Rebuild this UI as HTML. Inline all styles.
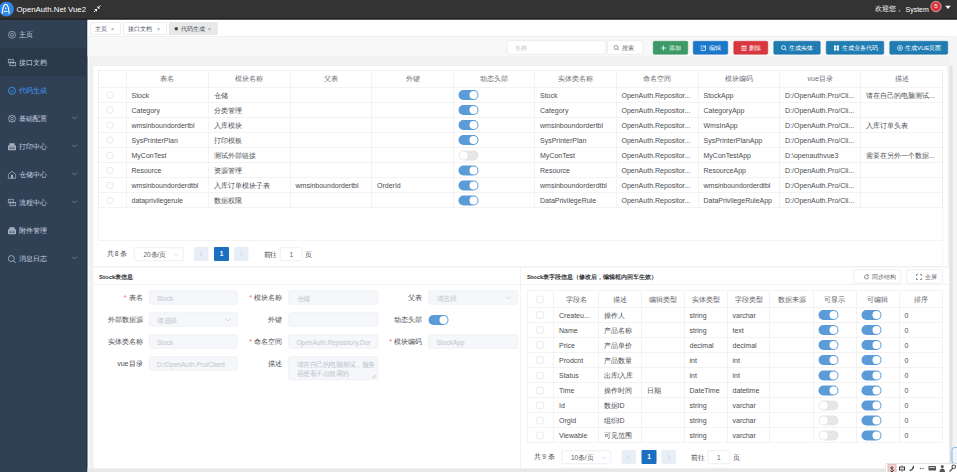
<!DOCTYPE html><html><head><meta charset="utf-8"><title>OpenAuth.Net</title><style>
html,body{margin:0;padding:0;width:957px;height:472px;overflow:hidden;background:#f2f2f2}
#root{position:absolute;left:0;top:0;width:1914px;height:944px;transform:scale(0.5);transform-origin:0 0;font-family:"Liberation Sans",sans-serif;overflow:hidden;background:#f1f1f1;color:#606266}
.a{position:absolute;box-sizing:border-box}
.t{position:absolute;white-space:nowrap;line-height:1}
.hdr{left:0;top:0;width:1914px;height:38.5px;background:#333;border-bottom:2px solid #181818;z-index:2}
.side{left:0;top:38px;width:174px;height:906px;background:#304156}
.mi{position:absolute;left:0;width:173px;height:56px}
.mi .t{left:37px;top:21px;font-size:14px;color:#ccd5e0}
.mi svg{position:absolute;left:15px;top:20px}
.mi .arr{position:absolute;left:143px;top:23px}
.tabs{left:175px;top:38px;width:1739px;height:35px;background:#fff;border-bottom:1px solid #dcdfe6}
.tab{position:absolute;top:45px;height:24.5px;border:1px solid #d8dce5;background:#fff;box-sizing:border-box;font-size:12px;color:#495060}
.tab .t{top:6px}
.btn{position:absolute;top:82px;height:27px;border-radius:3px;box-sizing:border-box;color:#fff;font-size:12px}
.btn .t{top:7px}
.tbl{position:absolute;border-left:1px solid #e6e6e6;border-top:1px solid #e6e6e6;box-sizing:border-box}
.cell{position:absolute;box-sizing:border-box;border-right:1px solid #e6e6e6;border-bottom:1px solid #e6e6e6;font-size:14px;color:#4a4c50;overflow:hidden}
.cell .t{top:8px;left:10px}
.hc{color:#6a6d73;text-align:center}
.sw{position:absolute;width:40px;height:20px;border-radius:10px;background:#5a9bd8}
.sw:after{content:"";position:absolute;right:2px;top:2px;width:16px;height:16px;border-radius:8px;background:#fff}
.sw.off{background:#e6e6e6}
.sw.off:after{right:auto;left:2px}
.radio{position:absolute;width:14px;height:14px;border:1.5px solid #cfd2d8;border-radius:8px;box-sizing:border-box;background:#fff}
.chk{position:absolute;width:14px;height:14px;border:1.5px solid #d2d5db;border-radius:2px;box-sizing:border-box;background:#fff}
.inp{position:absolute;height:28px;border:1px solid #e4e7ed;background:#f5f7fa;border-radius:4px;box-sizing:border-box;font-size:13px;color:#c0c4cc}
.inp .t{left:15px;top:8px}
.lbl{position:absolute;font-size:14px;color:#4a4c50;white-space:nowrap;line-height:1;text-align:right}
.star{color:#f56c6c}
.pg{position:absolute;font-size:13px;color:#4a4c50}
.nocjk .c{font-size:1.33em;line-height:0;position:relative;top:.11em;-webkit-text-stroke:0.4px currentColor}
</style></head><body><div id="root">
<div class="a hdr">
<svg class="a" style="left:-2px;top:3px" width="31" height="31" viewBox="0 0 31 31"><circle cx="15" cy="15" r="14.8" fill="#2f86e8"/><path d="M6.8 23.5 C7.2 13 10 5.6 13.4 5.6 C16.8 5.6 19.6 13 20.2 23.5" fill="none" stroke="#fff" stroke-width="2.4" stroke-linecap="round"/><path d="M10 19.8 H17" fill="none" stroke="#fff" stroke-width="2"/><circle cx="13.4" cy="13.6" r="1.6" fill="#fff"/></svg>
<div class="t" style="left:33px;top:9.5px;font-size:15.6px;color:#fff">OpenAuth.Net Vue2</div>
<svg class="a" style="left:187px;top:10px" width="15" height="15" viewBox="0 0 15 15"><path d="M7 8 L7 13.5 L1.5 8 Z M8 7 L8 1.5 L13.5 7 Z" fill="#fff"/><path d="M0.8 14.2 L4.5 10.5 M14.2 0.8 L10.5 4.5" stroke="#fff" stroke-width="1.8"/></svg>
<div class="t" style="left:1750px;top:10px;font-size:14px;color:#fff"><span class="c">欢迎您，</span></div>
<div class="t" style="left:1811px;top:11px;font-size:14px;color:#fff">System</div>
<div class="a" style="left:1861px;top:2px;width:22px;height:22px;border-radius:11px;background:#d9363e;border:1.5px solid #fff;color:#fff;font-size:12px;text-align:center;line-height:19px">5</div>
<svg class="a" style="left:1890px;top:11px" width="12" height="8" viewBox="0 0 12 8"><path d="M0 0 H12 L6 7 Z" fill="#fff"/></svg>
</div>
<div class="a side"></div>
<div class="a" style="left:174px;top:73px;width:4px;height:871px;background:#fbfcfe"></div>
<div class="a" style="left:172.5px;top:38px;width:2px;height:906px;background:#1f2c3b"></div>
<div class="mi" style="top:40.5px;">
<svg width="18" height="18" viewBox="0 0 18 18"><circle cx="9" cy="8.5" r="7" fill="none" stroke="#a9b4c2" stroke-width="1.5"/><circle cx="9" cy="8.5" r="3" fill="none" stroke="#a9b4c2" stroke-width="1.5"/></svg>
<div class="t" style=""><span class="c">主页</span></div>
</div>
<div class="mi" style="top:96.5px;background:#2b3a4b;">
<svg width="18" height="18" viewBox="0 0 18 18"><rect x="1.5" y="1.5" width="10" height="7" fill="none" stroke="#a9b4c2" stroke-width="1.6"/><rect x="5" y="8" width="11.5" height="6.5" fill="none" stroke="#a9b4c2" stroke-width="1.6"/><path d="M4.5 4.5 L13 11" stroke="#a9b4c2" stroke-width="1.4"/></svg>
<div class="t" style=""><span class="c">接口文档</span></div>
</div>
<div class="mi" style="top:152.5px;">
<svg width="18" height="18" viewBox="0 0 18 18"><circle cx="9" cy="8.5" r="7" fill="none" stroke="#409eff" stroke-width="1.6"/><path d="M5.5 8.5 L8 11 L12.5 6" fill="none" stroke="#409eff" stroke-width="1.6"/></svg>
<div class="t" style="color:#409eff;"><span class="c">代码生成</span></div>
</div>
<div class="mi" style="top:208.5px;">
<svg width="18" height="18" viewBox="0 0 18 18"><path d="M9 0.5 L11 3.5 L14.5 2.5 L14.5 6 L17.5 8 L14.5 10.5 L14.5 14 L11 13 L9 16 L7 13 L3.5 14 L3.5 10.5 L0.5 8 L3.5 6 L3.5 2.5 L7 3.5 Z" fill="none" stroke="#a9b4c2" stroke-width="1.6" stroke-linejoin="round"/><circle cx="9" cy="8.2" r="2.6" fill="none" stroke="#a9b4c2" stroke-width="1.5"/></svg>
<div class="t" style=""><span class="c">基础配置</span></div>
<svg class="arr" width="12" height="8" viewBox="0 0 12 8"><path d="M1 1 L6 6 L11 1" fill="none" stroke="#909aa8" stroke-width="1.3"/></svg>
</div>
<div class="mi" style="top:264.5px;">
<svg width="18" height="18" viewBox="0 0 18 18"><rect x="4" y="1.5" width="10" height="5" fill="#a9b4c2"/><rect x="1" y="5.5" width="16" height="10" rx="1.5" fill="#a9b4c2"/><rect x="3" y="8" width="12" height="3" fill="#7d8a9b"/><rect x="3" y="12" width="12" height="1.2" fill="#304156"/></svg>
<div class="t" style=""><span class="c">打印中心</span></div>
<svg class="arr" width="12" height="8" viewBox="0 0 12 8"><path d="M1 1 L6 6 L11 1" fill="none" stroke="#909aa8" stroke-width="1.3"/></svg>
</div>
<div class="mi" style="top:320.5px;">
<svg width="18" height="18" viewBox="0 0 18 18"><path d="M1.5 8 L9 1.5 L16.5 8 V15.5 H1.5 Z" fill="none" stroke="#a9b4c2" stroke-width="1.6" stroke-linejoin="round"/><rect x="7" y="8.5" width="4" height="7" fill="#a9b4c2"/></svg>
<div class="t" style=""><span class="c">仓储中心</span></div>
<svg class="arr" width="12" height="8" viewBox="0 0 12 8"><path d="M1 1 L6 6 L11 1" fill="none" stroke="#909aa8" stroke-width="1.3"/></svg>
</div>
<div class="mi" style="top:376.5px;">
<svg width="18" height="18" viewBox="0 0 18 18"><rect x="1.5" y="1.5" width="10" height="7" fill="none" stroke="#a9b4c2" stroke-width="1.6"/><rect x="5" y="8" width="11.5" height="6.5" fill="none" stroke="#a9b4c2" stroke-width="1.6"/><path d="M4.5 4.5 L13 11" stroke="#a9b4c2" stroke-width="1.4"/></svg>
<div class="t" style=""><span class="c">流程中心</span></div>
<svg class="arr" width="12" height="8" viewBox="0 0 12 8"><path d="M1 1 L6 6 L11 1" fill="none" stroke="#909aa8" stroke-width="1.3"/></svg>
</div>
<div class="mi" style="top:432.5px;">
<svg width="18" height="18" viewBox="0 0 18 18"><rect x="4" y="1.5" width="10" height="5" fill="#a9b4c2"/><rect x="1" y="5.5" width="16" height="10" rx="1.5" fill="#a9b4c2"/><rect x="3" y="8" width="12" height="3" fill="#7d8a9b"/><rect x="3" y="12" width="12" height="1.2" fill="#304156"/></svg>
<div class="t" style=""><span class="c">附件管理</span></div>
</div>
<div class="mi" style="top:488.5px;">
<svg width="18" height="18" viewBox="0 0 18 18"><circle cx="7.6" cy="8.1" r="6" fill="none" stroke="#a9b4c2" stroke-width="1.7"/><path d="M11.8 12.3 L16 16.5" stroke="#a9b4c2" stroke-width="1.8" stroke-linecap="round"/></svg>
<div class="t" style=""><span class="c">消息日志</span></div>
<svg class="arr" width="12" height="8" viewBox="0 0 12 8"><path d="M1 1 L6 6 L11 1" fill="none" stroke="#909aa8" stroke-width="1.3"/></svg>
</div>
<div class="a tabs"></div>
<div class="tab" style="left:181px;width:60px;">
<div class="t" style="left:8px"><span class="c">主页</span></div>
<div class="t" style="left:40px;top:7px;font-size:10px;color:#888">×</div>
</div>
<div class="tab" style="left:247px;width:86px;">
<div class="t" style="left:8px"><span class="c">接口文档</span></div>
<div class="t" style="left:66px;top:7px;font-size:10px;color:#888">×</div>
</div>
<div class="tab" style="left:338px;width:97px;background:#e8e8e8;border-color:#e0e0e0;">
<div class="a" style="left:10px;top:8px;width:7px;height:7px;border-radius:4px;background:#444"></div>
<div class="t" style="left:23px"><span class="c">代码生成</span></div>
<div class="t" style="left:77px;top:7px;font-size:10px;color:#888">×</div>
</div>
<div class="a" style="left:175px;top:73px;width:1739px;height:40px;background:#f8f8f8"></div>
<div class="a" style="left:1014px;top:81px;width:198px;height:28px;border:1px solid #dcdfe6;border-radius:4px;background:#fff"><div class="t" style="left:14px;top:8px;font-size:12px;color:#c0c4cc"><span class="c">名称</span></div></div>
<div class="a" style="left:1214px;top:81px;width:72px;height:28px;border:1px solid #dcdfe6;border-radius:4px;background:#fff"><svg class="a" style="left:12px;top:8px" width="12" height="12" viewBox="0 0 12 12"><circle cx="5" cy="5" r="4" fill="none" stroke="#606266" stroke-width="1.3"/><path d="M8 8 L11 11" stroke="#606266" stroke-width="1.3"/></svg><div class="t" style="left:28px;top:8px;font-size:12px;color:#606266"><span class="c">搜索</span></div></div>
<div class="btn" style="left:1306px;width:70px;background:#3d9a66;border:1px solid #2f8656">
<svg class="a" style="left:14px;top:7px" width="12" height="12" viewBox="0 0 12 12"><path d="M6 1 V11 M1 6 H11" stroke="#fff" stroke-width="1.6"/></svg>
<div class="t" style="left:30px"><span class="c">添加</span></div>
</div>
<div class="btn" style="left:1386px;width:70px;background:#1a78cb;border:1px solid #1467b0">
<svg class="a" style="left:14px;top:7px" width="12" height="12" viewBox="0 0 12 12"><rect x="1" y="2" width="9" height="9" fill="none" stroke="#fff" stroke-width="1.4"/><path d="M5 7 L11 1" stroke="#fff" stroke-width="1.6"/></svg>
<div class="t" style="left:30px"><span class="c">编辑</span></div>
</div>
<div class="btn" style="left:1467px;width:69px;background:#d9363e;border:1px solid #c02e36">
<svg class="a" style="left:14px;top:7px" width="12" height="12" viewBox="0 0 12 12"><rect x="2" y="3" width="8" height="8" fill="none" stroke="#fff" stroke-width="1.4"/><path d="M1 2 H11 M5 5 V9 M7 5 V9" stroke="#fff" stroke-width="1.2"/></svg>
<div class="t" style="left:30px"><span class="c">删除</span></div>
</div>
<div class="btn" style="left:1547px;width:94px;background:#1f7db3;border:1px solid #17699a">
<svg class="a" style="left:14px;top:7px" width="12" height="12" viewBox="0 0 12 12"><circle cx="5" cy="5" r="4" fill="none" stroke="#fff" stroke-width="1.6"/><path d="M8 8 L11 11" stroke="#fff" stroke-width="1.6"/></svg>
<div class="t" style="left:30px"><span class="c">生成实体</span></div>
</div>
<div class="btn" style="left:1652px;width:116px;background:#1f7db3;border:1px solid #17699a">
<svg class="a" style="left:14px;top:7px" width="12" height="12" viewBox="0 0 12 12"><rect x="1" y="1" width="4.5" height="4.5" fill="#fff"/><rect x="6.5" y="1" width="4.5" height="4.5" fill="#fff"/><rect x="1" y="6.5" width="4.5" height="4.5" fill="#fff"/><rect x="6.5" y="6.5" width="4.5" height="4.5" fill="#fff"/></svg>
<div class="t" style="left:30px"><span class="c">生成业务代码</span></div>
</div>
<div class="btn" style="left:1779px;width:117px;background:#1f7db3;border:1px solid #17699a">
<svg class="a" style="left:14px;top:7px" width="12" height="12" viewBox="0 0 12 12"><circle cx="6" cy="6" r="5" fill="none" stroke="#fff" stroke-width="1.3"/><circle cx="6" cy="6" r="2" fill="none" stroke="#fff" stroke-width="1.3"/></svg>
<div class="t" style="left:30px"><span class="c">生成</span>VUE<span class="c">页面</span></div>
</div>
<div class="a" style="left:187px;top:131.5px;width:1708px;height:400.5px;background:#fff"></div>
<div class="tbl" style="left:197px;top:140px;width:1688px;height:277.2px"></div>
<div class="a" style="left:197px;top:140px;width:1px;height:341px;background:#e6e6e6"></div>
<div class="a" style="left:197px;top:480px;width:1688px;height:1px;background:#e6e6e6"></div>
<div class="a" style="left:1884px;top:140px;width:1px;height:392px;background:#ececec"></div>
<div class="cell hc" style="left:197px;top:140px;width:56px;height:35px"><div class="t" style="left:0;width:100%;top:10px"></div></div>
<div class="cell hc" style="left:253px;top:140px;width:164.5px;height:35px"><div class="t" style="left:0;width:100%;top:10px"><span class="c">表名</span></div></div>
<div class="cell hc" style="left:417.5px;top:140px;width:163.5px;height:35px"><div class="t" style="left:0;width:100%;top:10px"><span class="c">模块名称</span></div></div>
<div class="cell hc" style="left:581px;top:140px;width:163px;height:35px"><div class="t" style="left:0;width:100%;top:10px"><span class="c">父表</span></div></div>
<div class="cell hc" style="left:744px;top:140px;width:163px;height:35px"><div class="t" style="left:0;width:100%;top:10px"><span class="c">外键</span></div></div>
<div class="cell hc" style="left:907px;top:140px;width:163px;height:35px"><div class="t" style="left:0;width:100%;top:10px"><span class="c">动态头部</span></div></div>
<div class="cell hc" style="left:1070px;top:140px;width:163px;height:35px"><div class="t" style="left:0;width:100%;top:10px"><span class="c">实体类名称</span></div></div>
<div class="cell hc" style="left:1233px;top:140px;width:164px;height:35px"><div class="t" style="left:0;width:100%;top:10px"><span class="c">命名空间</span></div></div>
<div class="cell hc" style="left:1397px;top:140px;width:163px;height:35px"><div class="t" style="left:0;width:100%;top:10px"><span class="c">模块编码</span></div></div>
<div class="cell hc" style="left:1560px;top:140px;width:162px;height:35px"><div class="t" style="left:0;width:100%;top:10px">vue<span class="c">目录</span></div></div>
<div class="cell hc" style="left:1722px;top:140px;width:163px;height:35px"><div class="t" style="left:0;width:100%;top:10px"><span class="c">描述</span></div></div>
<div class="cell" style="left:197px;top:175.0px;width:56px;height:30.15px"><div class="radio" style="left:16px;top:8px"></div></div>
<div class="cell" style="left:253px;top:175.0px;width:164.5px;height:30.15px">
<div class="t">Stock</div>
</div>
<div class="cell" style="left:417.5px;top:175.0px;width:163.5px;height:30.15px">
<div class="t"><span class="c">仓储</span></div>
</div>
<div class="cell" style="left:581px;top:175.0px;width:163px;height:30.15px">
</div>
<div class="cell" style="left:744px;top:175.0px;width:163px;height:30.15px">
</div>
<div class="cell" style="left:907px;top:175.0px;width:163px;height:30.15px">
<div class="sw " style="left:10px;top:5px"></div>
</div>
<div class="cell" style="left:1070px;top:175.0px;width:163px;height:30.15px">
<div class="t">Stock</div>
</div>
<div class="cell" style="left:1233px;top:175.0px;width:164px;height:30.15px">
<div class="t">OpenAuth.Repositor...</div>
</div>
<div class="cell" style="left:1397px;top:175.0px;width:163px;height:30.15px">
<div class="t">StockApp</div>
</div>
<div class="cell" style="left:1560px;top:175.0px;width:162px;height:30.15px">
<div class="t">D:/OpenAuth.Pro/Cli...</div>
</div>
<div class="cell" style="left:1722px;top:175.0px;width:163px;height:30.15px">
<div class="t"><span class="c">请在自己的电脑测试</span>...</div>
</div>
<div class="cell" style="left:197px;top:205.15px;width:56px;height:30.15px"><div class="radio" style="left:16px;top:8px"></div></div>
<div class="cell" style="left:253px;top:205.15px;width:164.5px;height:30.15px">
<div class="t">Category</div>
</div>
<div class="cell" style="left:417.5px;top:205.15px;width:163.5px;height:30.15px">
<div class="t"><span class="c">分类管理</span></div>
</div>
<div class="cell" style="left:581px;top:205.15px;width:163px;height:30.15px">
</div>
<div class="cell" style="left:744px;top:205.15px;width:163px;height:30.15px">
</div>
<div class="cell" style="left:907px;top:205.15px;width:163px;height:30.15px">
<div class="sw " style="left:10px;top:5px"></div>
</div>
<div class="cell" style="left:1070px;top:205.15px;width:163px;height:30.15px">
<div class="t">Category</div>
</div>
<div class="cell" style="left:1233px;top:205.15px;width:164px;height:30.15px">
<div class="t">OpenAuth.Repositor...</div>
</div>
<div class="cell" style="left:1397px;top:205.15px;width:163px;height:30.15px">
<div class="t">CategoryApp</div>
</div>
<div class="cell" style="left:1560px;top:205.15px;width:162px;height:30.15px">
<div class="t">D:/OpenAuth.Pro/Cli...</div>
</div>
<div class="cell" style="left:1722px;top:205.15px;width:163px;height:30.15px">
</div>
<div class="cell" style="left:197px;top:235.3px;width:56px;height:30.15px"><div class="radio" style="left:16px;top:8px"></div></div>
<div class="cell" style="left:253px;top:235.3px;width:164.5px;height:30.15px">
<div class="t">wmsinboundordertbl</div>
</div>
<div class="cell" style="left:417.5px;top:235.3px;width:163.5px;height:30.15px">
<div class="t"><span class="c">入库模块</span></div>
</div>
<div class="cell" style="left:581px;top:235.3px;width:163px;height:30.15px">
</div>
<div class="cell" style="left:744px;top:235.3px;width:163px;height:30.15px">
</div>
<div class="cell" style="left:907px;top:235.3px;width:163px;height:30.15px">
<div class="sw " style="left:10px;top:5px"></div>
</div>
<div class="cell" style="left:1070px;top:235.3px;width:163px;height:30.15px">
<div class="t">wmsinboundordertbl</div>
</div>
<div class="cell" style="left:1233px;top:235.3px;width:164px;height:30.15px">
<div class="t">OpenAuth.Repositor...</div>
</div>
<div class="cell" style="left:1397px;top:235.3px;width:163px;height:30.15px">
<div class="t">WmsInApp</div>
</div>
<div class="cell" style="left:1560px;top:235.3px;width:162px;height:30.15px">
<div class="t">D:/OpenAuth.Pro/Cli...</div>
</div>
<div class="cell" style="left:1722px;top:235.3px;width:163px;height:30.15px">
<div class="t"><span class="c">入库订单头表</span></div>
</div>
<div class="cell" style="left:197px;top:265.45px;width:56px;height:30.15px"><div class="radio" style="left:16px;top:8px"></div></div>
<div class="cell" style="left:253px;top:265.45px;width:164.5px;height:30.15px">
<div class="t">SysPrinterPlan</div>
</div>
<div class="cell" style="left:417.5px;top:265.45px;width:163.5px;height:30.15px">
<div class="t"><span class="c">打印模板</span></div>
</div>
<div class="cell" style="left:581px;top:265.45px;width:163px;height:30.15px">
</div>
<div class="cell" style="left:744px;top:265.45px;width:163px;height:30.15px">
</div>
<div class="cell" style="left:907px;top:265.45px;width:163px;height:30.15px">
<div class="sw " style="left:10px;top:5px"></div>
</div>
<div class="cell" style="left:1070px;top:265.45px;width:163px;height:30.15px">
<div class="t">SysPrinterPlan</div>
</div>
<div class="cell" style="left:1233px;top:265.45px;width:164px;height:30.15px">
<div class="t">OpenAuth.Repositor...</div>
</div>
<div class="cell" style="left:1397px;top:265.45px;width:163px;height:30.15px">
<div class="t">SysPrinterPlanApp</div>
</div>
<div class="cell" style="left:1560px;top:265.45px;width:162px;height:30.15px">
<div class="t">D:/OpenAuth.Pro/Cli...</div>
</div>
<div class="cell" style="left:1722px;top:265.45px;width:163px;height:30.15px">
</div>
<div class="cell" style="left:197px;top:295.6px;width:56px;height:30.15px"><div class="radio" style="left:16px;top:8px"></div></div>
<div class="cell" style="left:253px;top:295.6px;width:164.5px;height:30.15px">
<div class="t">MyConTest</div>
</div>
<div class="cell" style="left:417.5px;top:295.6px;width:163.5px;height:30.15px">
<div class="t"><span class="c">测试外部链接</span></div>
</div>
<div class="cell" style="left:581px;top:295.6px;width:163px;height:30.15px">
</div>
<div class="cell" style="left:744px;top:295.6px;width:163px;height:30.15px">
</div>
<div class="cell" style="left:907px;top:295.6px;width:163px;height:30.15px">
<div class="sw off" style="left:10px;top:5px"></div>
</div>
<div class="cell" style="left:1070px;top:295.6px;width:163px;height:30.15px">
<div class="t">MyConTest</div>
</div>
<div class="cell" style="left:1233px;top:295.6px;width:164px;height:30.15px">
<div class="t">OpenAuth.Repositor...</div>
</div>
<div class="cell" style="left:1397px;top:295.6px;width:163px;height:30.15px">
<div class="t">MyConTestApp</div>
</div>
<div class="cell" style="left:1560px;top:295.6px;width:162px;height:30.15px">
<div class="t">D:\openauthvue3</div>
</div>
<div class="cell" style="left:1722px;top:295.6px;width:163px;height:30.15px">
<div class="t"><span class="c">需要在另外一个数据</span>...</div>
</div>
<div class="cell" style="left:197px;top:325.75px;width:56px;height:30.15px"><div class="radio" style="left:16px;top:8px"></div></div>
<div class="cell" style="left:253px;top:325.75px;width:164.5px;height:30.15px">
<div class="t">Resource</div>
</div>
<div class="cell" style="left:417.5px;top:325.75px;width:163.5px;height:30.15px">
<div class="t"><span class="c">资源管理</span></div>
</div>
<div class="cell" style="left:581px;top:325.75px;width:163px;height:30.15px">
</div>
<div class="cell" style="left:744px;top:325.75px;width:163px;height:30.15px">
</div>
<div class="cell" style="left:907px;top:325.75px;width:163px;height:30.15px">
<div class="sw " style="left:10px;top:5px"></div>
</div>
<div class="cell" style="left:1070px;top:325.75px;width:163px;height:30.15px">
<div class="t">Resource</div>
</div>
<div class="cell" style="left:1233px;top:325.75px;width:164px;height:30.15px">
<div class="t">OpenAuth.Repositor...</div>
</div>
<div class="cell" style="left:1397px;top:325.75px;width:163px;height:30.15px">
<div class="t">ResourceApp</div>
</div>
<div class="cell" style="left:1560px;top:325.75px;width:162px;height:30.15px">
<div class="t">D:/OpenAuth.Pro/Cli...</div>
</div>
<div class="cell" style="left:1722px;top:325.75px;width:163px;height:30.15px">
</div>
<div class="cell" style="left:197px;top:355.9px;width:56px;height:30.15px"><div class="radio" style="left:16px;top:8px"></div></div>
<div class="cell" style="left:253px;top:355.9px;width:164.5px;height:30.15px">
<div class="t">wmsinboundorderdtbl</div>
</div>
<div class="cell" style="left:417.5px;top:355.9px;width:163.5px;height:30.15px">
<div class="t"><span class="c">入库订单模块子表</span></div>
</div>
<div class="cell" style="left:581px;top:355.9px;width:163px;height:30.15px">
<div class="t">wmsinboundordertbl</div>
</div>
<div class="cell" style="left:744px;top:355.9px;width:163px;height:30.15px">
<div class="t">OrderId</div>
</div>
<div class="cell" style="left:907px;top:355.9px;width:163px;height:30.15px">
<div class="sw " style="left:10px;top:5px"></div>
</div>
<div class="cell" style="left:1070px;top:355.9px;width:163px;height:30.15px">
<div class="t">wmsinboundorderdtbl</div>
</div>
<div class="cell" style="left:1233px;top:355.9px;width:164px;height:30.15px">
<div class="t">OpenAuth.Repositor...</div>
</div>
<div class="cell" style="left:1397px;top:355.9px;width:163px;height:30.15px">
<div class="t">wmsinboundorderdtbl</div>
</div>
<div class="cell" style="left:1560px;top:355.9px;width:162px;height:30.15px">
<div class="t">D:/OpenAuth.Pro/Cli...</div>
</div>
<div class="cell" style="left:1722px;top:355.9px;width:163px;height:30.15px">
</div>
<div class="cell" style="left:197px;top:386.04999999999995px;width:56px;height:30.15px"><div class="radio" style="left:16px;top:8px"></div></div>
<div class="cell" style="left:253px;top:386.04999999999995px;width:164.5px;height:30.15px">
<div class="t">dataprivilegerule</div>
</div>
<div class="cell" style="left:417.5px;top:386.04999999999995px;width:163.5px;height:30.15px">
<div class="t"><span class="c">数据权限</span></div>
</div>
<div class="cell" style="left:581px;top:386.04999999999995px;width:163px;height:30.15px">
</div>
<div class="cell" style="left:744px;top:386.04999999999995px;width:163px;height:30.15px">
</div>
<div class="cell" style="left:907px;top:386.04999999999995px;width:163px;height:30.15px">
<div class="sw " style="left:10px;top:5px"></div>
</div>
<div class="cell" style="left:1070px;top:386.04999999999995px;width:163px;height:30.15px">
<div class="t">DataPrivilegeRule</div>
</div>
<div class="cell" style="left:1233px;top:386.04999999999995px;width:164px;height:30.15px">
<div class="t">OpenAuth.Repositor...</div>
</div>
<div class="cell" style="left:1397px;top:386.04999999999995px;width:163px;height:30.15px">
<div class="t">DataPrivilegeRuleApp</div>
</div>
<div class="cell" style="left:1560px;top:386.04999999999995px;width:162px;height:30.15px">
<div class="t">D:/OpenAuth.Pro/Cli...</div>
</div>
<div class="cell" style="left:1722px;top:386.04999999999995px;width:163px;height:30.15px">
</div>
<div class="t pg" style="left:213px;top:501px"><span class="c">共</span> 8 <span class="c">条</span></div>
<div class="a" style="left:268px;top:495px;width:99px;height:27px;border:1px solid #dcdfe6;border-radius:3px;background:#fff"><div class="t" style="left:18px;top:7px;font-size:13px;color:#606266">20<span class="c">条</span>/<span class="c">页</span></div><svg class="a" style="left:78px;top:10px" width="10" height="7" viewBox="0 0 10 7"><path d="M1 1 L5 5 L9 1" fill="none" stroke="#c0c4cc" stroke-width="1.2"/></svg></div>
<div class="a" style="left:388px;top:494px;width:29px;height:28px;background:#e8eef5;border-radius:2px"><svg class="a" style="left:10px;top:9px" width="8" height="10" viewBox="0 0 8 10"><path d="M6 1 L2 5 L6 9" fill="none" stroke="#c0c4cc" stroke-width="1.3"/></svg></div>
<div class="a" style="left:428px;top:494px;width:30px;height:28px;background:#1a6fc0;border-radius:2px;color:#fff;font-size:13px;font-weight:bold;text-align:center;line-height:28px">1</div>
<div class="a" style="left:468px;top:494px;width:29px;height:28px;background:#e8eef5;border-radius:2px"><svg class="a" style="left:11px;top:9px" width="8" height="10" viewBox="0 0 8 10"><path d="M2 1 L6 5 L2 9" fill="none" stroke="#c0c4cc" stroke-width="1.3"/></svg></div>
<div class="t pg" style="left:527px;top:502px"><span class="c">前往</span></div>
<div class="a" style="left:560px;top:495px;width:45px;height:27px;border:1px solid #dcdfe6;border-radius:3px;background:#fff;text-align:center;font-size:13px;line-height:25px;color:#606266">1</div>
<div class="t pg" style="left:610px;top:502px"><span class="c">页</span></div>
<div class="a" style="left:187px;top:535px;width:1711px;height:402px;background:#fff"></div>
<div class="a" style="left:1040px;top:535px;width:1px;height:402px;background:#e6e6e6"></div>
<div class="a" style="left:187px;top:568px;width:853px;height:1px;background:#e6e6e6"></div>
<div class="a" style="left:1041px;top:568px;width:857px;height:1px;background:#e6e6e6"></div>
<div class="t" style="left:198px;top:547.5px;font-size:12px;font-weight:bold;color:#303133">Stock<span class="c">表信息</span></div>
<div class="t" style="left:1054px;top:547.5px;font-size:12px;font-weight:bold;color:#303133">Stock<span class="c">表字段信息（修改后，编辑框内回车生效）</span></div>
<div class="lbl" style="right:1629px;top:588px"><span class="star">* </span><span class="c">表名</span></div>
<div class="inp" style="left:298px;top:581px;width:177px;height:28px"><div class="t">Stock</div>
</div>
<div class="lbl" style="right:1350px;top:588px"><span class="star">* </span><span class="c">模块名称</span></div>
<div class="inp" style="left:577px;top:581px;width:179px;height:28px"><div class="t"><span class="c">仓储</span></div>
</div>
<div class="lbl" style="right:1070px;top:588px"><span class="c">父表</span></div>
<div class="inp" style="left:857px;top:581px;width:179px;height:28px"><div class="t"><span class="c">请选择</span></div>
<svg class="a" style="left:153px;top:10px" width="12" height="8" viewBox="0 0 12 8"><path d="M1 1 L6 6 L11 1" fill="none" stroke="#c0c4cc" stroke-width="1.3"/></svg>
</div>
<div class="lbl" style="right:1629px;top:632px"><span class="c">外部数据源</span></div>
<div class="inp" style="left:298px;top:625px;width:177px;height:28px"><div class="t"><span class="c">请选择</span></div>
<svg class="a" style="left:151px;top:10px" width="12" height="8" viewBox="0 0 12 8"><path d="M1 1 L6 6 L11 1" fill="none" stroke="#c0c4cc" stroke-width="1.3"/></svg>
</div>
<div class="lbl" style="right:1350px;top:632px"><span class="c">外键</span></div>
<div class="inp" style="left:577px;top:625px;width:179px;height:28px"><div class="t"></div>
</div>
<div class="lbl" style="right:1070px;top:632px"><span class="c">动态头部</span></div>
<div class="sw" style="left:857px;top:630px"></div>
<div class="lbl" style="right:1629px;top:676px"><span class="c">实体类名称</span></div>
<div class="inp" style="left:298px;top:669px;width:177px;height:28px"><div class="t">Stock</div>
</div>
<div class="lbl" style="right:1350px;top:676px"><span class="star">* </span><span class="c">命名空间</span></div>
<div class="inp" style="left:577px;top:669px;width:179px;height:28px"><div class="t">OpenAuth.Repository.Dor</div>
</div>
<div class="lbl" style="right:1070px;top:676px"><span class="star">* </span><span class="c">模块编码</span></div>
<div class="inp" style="left:857px;top:669px;width:179px;height:28px"><div class="t">StockApp</div>
</div>
<div class="lbl" style="right:1629px;top:720px">vue<span class="c">目录</span></div>
<div class="inp" style="left:298px;top:713px;width:177px;height:28px"><div class="t">D:/OpenAuth.Pro/Client</div>
</div>
<div class="lbl" style="right:1350px;top:720px"><span class="c">描述</span></div>
<div class="inp" style="left:577px;top:713px;width:179px;height:47px"><div class="t" style="top:6px;line-height:18px;white-space:normal;width:158px"><span class="c">请在自己的电脑测试，服务器是看不出效果的</span></div><svg class="a" style="left:166px;top:34px" width="9" height="9" viewBox="0 0 9 9"><path d="M8 1 L1 8 M8 5 L5 8" stroke="#909399" stroke-width="1"/></svg></div>
<div class="a" style="left:1707px;top:539px;width:95px;height:28px;border:1px solid #dcdfe6;border-radius:3px;background:#fff"><svg class="a" style="left:19px;top:8px" width="12" height="12" viewBox="0 0 12 12"><path d="M10 6 A4 4 0 1 1 8.5 2.8" fill="none" stroke="#606266" stroke-width="1.4"/><path d="M7 1 L10 2.5 L8 5" fill="none" stroke="#606266" stroke-width="1.3"/></svg><div class="t" style="left:35px;top:8px;font-size:12px;color:#606266"><span class="c">同步结构</span></div></div>
<div class="a" style="left:1813px;top:539px;width:72px;height:28px;border:1px solid #dcdfe6;border-radius:3px;background:#fff"><svg class="a" style="left:18px;top:8px" width="12" height="12" viewBox="0 0 12 12"><path d="M1 4 V1 H4 M8 1 H11 V4 M11 8 V11 H8 M4 11 H1 V8" fill="none" stroke="#606266" stroke-width="1.4"/></svg><div class="t" style="left:35px;top:8px;font-size:12px;color:#606266"><span class="c">全屏</span></div></div>
<div class="tbl" style="left:1054px;top:580.5px;width:831px;height:305.84999999999997px"></div>
<div class="cell hc" style="left:1054px;top:580.5px;width:54px;height:34.5px">
<div class="chk" style="left:19px;top:11px"></div>
</div>
<div class="cell hc" style="left:1108px;top:580.5px;width:89px;height:34.5px">
<div class="t" style="left:0;width:100%;top:10px;color:#606266"><span class="c">字段名</span></div>
</div>
<div class="cell hc" style="left:1197px;top:580.5px;width:86px;height:34.5px">
<div class="t" style="left:0;width:100%;top:10px;color:#606266"><span class="c">描述</span></div>
</div>
<div class="cell hc" style="left:1283px;top:580.5px;width:86px;height:34.5px">
<div class="t" style="left:0;width:100%;top:10px;color:#606266"><span class="c">编辑类型</span></div>
</div>
<div class="cell hc" style="left:1369px;top:580.5px;width:86px;height:34.5px">
<div class="t" style="left:0;width:100%;top:10px;color:#606266"><span class="c">实体类型</span></div>
</div>
<div class="cell hc" style="left:1455px;top:580.5px;width:85px;height:34.5px">
<div class="t" style="left:0;width:100%;top:10px;color:#606266"><span class="c">字段类型</span></div>
</div>
<div class="cell hc" style="left:1540px;top:580.5px;width:87px;height:34.5px">
<div class="t" style="left:0;width:100%;top:10px;color:#606266"><span class="c">数据来源</span></div>
</div>
<div class="cell hc" style="left:1627px;top:580.5px;width:86px;height:34.5px">
<div class="t" style="left:0;width:100%;top:10px;color:#606266"><span class="c">可显示</span></div>
</div>
<div class="cell hc" style="left:1713px;top:580.5px;width:86px;height:34.5px">
<div class="t" style="left:0;width:100%;top:10px;color:#606266"><span class="c">可编辑</span></div>
</div>
<div class="cell hc" style="left:1799px;top:580.5px;width:86px;height:34.5px">
<div class="t" style="left:0;width:100%;top:10px;color:#606266"><span class="c">排序</span></div>
</div>
<div class="cell" style="left:1054px;top:615.0px;width:54px;height:30.15px"><div class="chk" style="left:19px;top:8px"></div></div>
<div class="cell" style="left:1108px;top:615.0px;width:89px;height:30.15px">
<div class="t">Createu...</div>
</div>
<div class="cell" style="left:1197px;top:615.0px;width:86px;height:30.15px">
<div class="t"><span class="c">操作人</span></div>
</div>
<div class="cell" style="left:1283px;top:615.0px;width:86px;height:30.15px">
</div>
<div class="cell" style="left:1369px;top:615.0px;width:86px;height:30.15px">
<div class="t">string</div>
</div>
<div class="cell" style="left:1455px;top:615.0px;width:85px;height:30.15px">
<div class="t">varchar</div>
</div>
<div class="cell" style="left:1540px;top:615.0px;width:87px;height:30.15px">
</div>
<div class="cell" style="left:1627px;top:615.0px;width:86px;height:30.15px">
<div class="sw " style="left:10px;top:5px"></div>
</div>
<div class="cell" style="left:1713px;top:615.0px;width:86px;height:30.15px">
<div class="sw " style="left:10px;top:5px"></div>
</div>
<div class="cell" style="left:1799px;top:615.0px;width:86px;height:30.15px">
<div class="t">0</div>
</div>
<div class="cell" style="left:1054px;top:645.15px;width:54px;height:30.15px"><div class="chk" style="left:19px;top:8px"></div></div>
<div class="cell" style="left:1108px;top:645.15px;width:89px;height:30.15px">
<div class="t">Name</div>
</div>
<div class="cell" style="left:1197px;top:645.15px;width:86px;height:30.15px">
<div class="t"><span class="c">产品名称</span></div>
</div>
<div class="cell" style="left:1283px;top:645.15px;width:86px;height:30.15px">
</div>
<div class="cell" style="left:1369px;top:645.15px;width:86px;height:30.15px">
<div class="t">string</div>
</div>
<div class="cell" style="left:1455px;top:645.15px;width:85px;height:30.15px">
<div class="t">text</div>
</div>
<div class="cell" style="left:1540px;top:645.15px;width:87px;height:30.15px">
</div>
<div class="cell" style="left:1627px;top:645.15px;width:86px;height:30.15px">
<div class="sw " style="left:10px;top:5px"></div>
</div>
<div class="cell" style="left:1713px;top:645.15px;width:86px;height:30.15px">
<div class="sw " style="left:10px;top:5px"></div>
</div>
<div class="cell" style="left:1799px;top:645.15px;width:86px;height:30.15px">
<div class="t">0</div>
</div>
<div class="cell" style="left:1054px;top:675.3px;width:54px;height:30.15px"><div class="chk" style="left:19px;top:8px"></div></div>
<div class="cell" style="left:1108px;top:675.3px;width:89px;height:30.15px">
<div class="t">Price</div>
</div>
<div class="cell" style="left:1197px;top:675.3px;width:86px;height:30.15px">
<div class="t"><span class="c">产品单价</span></div>
</div>
<div class="cell" style="left:1283px;top:675.3px;width:86px;height:30.15px">
</div>
<div class="cell" style="left:1369px;top:675.3px;width:86px;height:30.15px">
<div class="t">decimal</div>
</div>
<div class="cell" style="left:1455px;top:675.3px;width:85px;height:30.15px">
<div class="t">decimal</div>
</div>
<div class="cell" style="left:1540px;top:675.3px;width:87px;height:30.15px">
</div>
<div class="cell" style="left:1627px;top:675.3px;width:86px;height:30.15px">
<div class="sw " style="left:10px;top:5px"></div>
</div>
<div class="cell" style="left:1713px;top:675.3px;width:86px;height:30.15px">
<div class="sw " style="left:10px;top:5px"></div>
</div>
<div class="cell" style="left:1799px;top:675.3px;width:86px;height:30.15px">
<div class="t">0</div>
</div>
<div class="cell" style="left:1054px;top:705.45px;width:54px;height:30.15px"><div class="chk" style="left:19px;top:8px"></div></div>
<div class="cell" style="left:1108px;top:705.45px;width:89px;height:30.15px">
<div class="t">Prodcnt</div>
</div>
<div class="cell" style="left:1197px;top:705.45px;width:86px;height:30.15px">
<div class="t"><span class="c">产品数量</span></div>
</div>
<div class="cell" style="left:1283px;top:705.45px;width:86px;height:30.15px">
</div>
<div class="cell" style="left:1369px;top:705.45px;width:86px;height:30.15px">
<div class="t">int</div>
</div>
<div class="cell" style="left:1455px;top:705.45px;width:85px;height:30.15px">
<div class="t">int</div>
</div>
<div class="cell" style="left:1540px;top:705.45px;width:87px;height:30.15px">
</div>
<div class="cell" style="left:1627px;top:705.45px;width:86px;height:30.15px">
<div class="sw " style="left:10px;top:5px"></div>
</div>
<div class="cell" style="left:1713px;top:705.45px;width:86px;height:30.15px">
<div class="sw " style="left:10px;top:5px"></div>
</div>
<div class="cell" style="left:1799px;top:705.45px;width:86px;height:30.15px">
<div class="t">0</div>
</div>
<div class="cell" style="left:1054px;top:735.6px;width:54px;height:30.15px"><div class="chk" style="left:19px;top:8px"></div></div>
<div class="cell" style="left:1108px;top:735.6px;width:89px;height:30.15px">
<div class="t">Status</div>
</div>
<div class="cell" style="left:1197px;top:735.6px;width:86px;height:30.15px">
<div class="t"><span class="c">出库</span>/<span class="c">入库</span></div>
</div>
<div class="cell" style="left:1283px;top:735.6px;width:86px;height:30.15px">
</div>
<div class="cell" style="left:1369px;top:735.6px;width:86px;height:30.15px">
<div class="t">int</div>
</div>
<div class="cell" style="left:1455px;top:735.6px;width:85px;height:30.15px">
<div class="t">int</div>
</div>
<div class="cell" style="left:1540px;top:735.6px;width:87px;height:30.15px">
</div>
<div class="cell" style="left:1627px;top:735.6px;width:86px;height:30.15px">
<div class="sw " style="left:10px;top:5px"></div>
</div>
<div class="cell" style="left:1713px;top:735.6px;width:86px;height:30.15px">
<div class="sw " style="left:10px;top:5px"></div>
</div>
<div class="cell" style="left:1799px;top:735.6px;width:86px;height:30.15px">
<div class="t">0</div>
</div>
<div class="cell" style="left:1054px;top:765.75px;width:54px;height:30.15px"><div class="chk" style="left:19px;top:8px"></div></div>
<div class="cell" style="left:1108px;top:765.75px;width:89px;height:30.15px">
<div class="t">Time</div>
</div>
<div class="cell" style="left:1197px;top:765.75px;width:86px;height:30.15px">
<div class="t"><span class="c">操作时间</span></div>
</div>
<div class="cell" style="left:1283px;top:765.75px;width:86px;height:30.15px">
<div class="t"><span class="c">日期</span></div>
</div>
<div class="cell" style="left:1369px;top:765.75px;width:86px;height:30.15px">
<div class="t">DateTime</div>
</div>
<div class="cell" style="left:1455px;top:765.75px;width:85px;height:30.15px">
<div class="t">datetime</div>
</div>
<div class="cell" style="left:1540px;top:765.75px;width:87px;height:30.15px">
</div>
<div class="cell" style="left:1627px;top:765.75px;width:86px;height:30.15px">
<div class="sw " style="left:10px;top:5px"></div>
</div>
<div class="cell" style="left:1713px;top:765.75px;width:86px;height:30.15px">
<div class="sw " style="left:10px;top:5px"></div>
</div>
<div class="cell" style="left:1799px;top:765.75px;width:86px;height:30.15px">
<div class="t">0</div>
</div>
<div class="cell" style="left:1054px;top:795.9px;width:54px;height:30.15px"><div class="chk" style="left:19px;top:8px"></div></div>
<div class="cell" style="left:1108px;top:795.9px;width:89px;height:30.15px">
<div class="t">Id</div>
</div>
<div class="cell" style="left:1197px;top:795.9px;width:86px;height:30.15px">
<div class="t"><span class="c">数据</span>ID</div>
</div>
<div class="cell" style="left:1283px;top:795.9px;width:86px;height:30.15px">
</div>
<div class="cell" style="left:1369px;top:795.9px;width:86px;height:30.15px">
<div class="t">string</div>
</div>
<div class="cell" style="left:1455px;top:795.9px;width:85px;height:30.15px">
<div class="t">varchar</div>
</div>
<div class="cell" style="left:1540px;top:795.9px;width:87px;height:30.15px">
</div>
<div class="cell" style="left:1627px;top:795.9px;width:86px;height:30.15px">
<div class="sw off" style="left:10px;top:5px"></div>
</div>
<div class="cell" style="left:1713px;top:795.9px;width:86px;height:30.15px">
<div class="sw " style="left:10px;top:5px"></div>
</div>
<div class="cell" style="left:1799px;top:795.9px;width:86px;height:30.15px">
<div class="t">0</div>
</div>
<div class="cell" style="left:1054px;top:826.05px;width:54px;height:30.15px"><div class="chk" style="left:19px;top:8px"></div></div>
<div class="cell" style="left:1108px;top:826.05px;width:89px;height:30.15px">
<div class="t">Orgid</div>
</div>
<div class="cell" style="left:1197px;top:826.05px;width:86px;height:30.15px">
<div class="t"><span class="c">组织</span>ID</div>
</div>
<div class="cell" style="left:1283px;top:826.05px;width:86px;height:30.15px">
</div>
<div class="cell" style="left:1369px;top:826.05px;width:86px;height:30.15px">
<div class="t">string</div>
</div>
<div class="cell" style="left:1455px;top:826.05px;width:85px;height:30.15px">
<div class="t">varchar</div>
</div>
<div class="cell" style="left:1540px;top:826.05px;width:87px;height:30.15px">
</div>
<div class="cell" style="left:1627px;top:826.05px;width:86px;height:30.15px">
<div class="sw off" style="left:10px;top:5px"></div>
</div>
<div class="cell" style="left:1713px;top:826.05px;width:86px;height:30.15px">
<div class="sw " style="left:10px;top:5px"></div>
</div>
<div class="cell" style="left:1799px;top:826.05px;width:86px;height:30.15px">
<div class="t">0</div>
</div>
<div class="cell" style="left:1054px;top:856.2px;width:54px;height:30.15px"><div class="chk" style="left:19px;top:8px"></div></div>
<div class="cell" style="left:1108px;top:856.2px;width:89px;height:30.15px">
<div class="t">Viewable</div>
</div>
<div class="cell" style="left:1197px;top:856.2px;width:86px;height:30.15px">
<div class="t"><span class="c">可见范围</span></div>
</div>
<div class="cell" style="left:1283px;top:856.2px;width:86px;height:30.15px">
</div>
<div class="cell" style="left:1369px;top:856.2px;width:86px;height:30.15px">
<div class="t">string</div>
</div>
<div class="cell" style="left:1455px;top:856.2px;width:85px;height:30.15px">
<div class="t">varchar</div>
</div>
<div class="cell" style="left:1540px;top:856.2px;width:87px;height:30.15px">
</div>
<div class="cell" style="left:1627px;top:856.2px;width:86px;height:30.15px">
<div class="sw off" style="left:10px;top:5px"></div>
</div>
<div class="cell" style="left:1713px;top:856.2px;width:86px;height:30.15px">
<div class="sw " style="left:10px;top:5px"></div>
</div>
<div class="cell" style="left:1799px;top:856.2px;width:86px;height:30.15px">
<div class="t">0</div>
</div>
<div class="t pg" style="left:1068px;top:907px"><span class="c">共</span> 9 <span class="c">条</span></div>
<div class="a" style="left:1123px;top:901px;width:99px;height:27px;border:1px solid #dcdfe6;border-radius:3px;background:#fff"><div class="t" style="left:18px;top:7px;font-size:13px;color:#606266">10<span class="c">条</span>/<span class="c">页</span></div><svg class="a" style="left:78px;top:10px" width="10" height="7" viewBox="0 0 10 7"><path d="M1 1 L5 5 L9 1" fill="none" stroke="#c0c4cc" stroke-width="1.2"/></svg></div>
<div class="a" style="left:1243px;top:900px;width:29px;height:28px;background:#e8eef5;border-radius:2px"><svg class="a" style="left:10px;top:9px" width="8" height="10" viewBox="0 0 8 10"><path d="M6 1 L2 5 L6 9" fill="none" stroke="#c0c4cc" stroke-width="1.3"/></svg></div>
<div class="a" style="left:1283px;top:900px;width:30px;height:28px;background:#1a6fc0;border-radius:2px;color:#fff;font-size:13px;font-weight:bold;text-align:center;line-height:28px">1</div>
<div class="a" style="left:1323px;top:900px;width:29px;height:28px;background:#e8eef5;border-radius:2px"><svg class="a" style="left:11px;top:9px" width="8" height="10" viewBox="0 0 8 10"><path d="M2 1 L6 5 L2 9" fill="none" stroke="#c0c4cc" stroke-width="1.3"/></svg></div>
<div class="t pg" style="left:1382px;top:908px"><span class="c">前往</span></div>
<div class="a" style="left:1415px;top:901px;width:45px;height:27px;border:1px solid #dcdfe6;border-radius:3px;background:#fff;text-align:center;font-size:13px;line-height:25px;color:#606266">1</div>
<div class="t pg" style="left:1465px;top:908px"><span class="c">页</span></div>
<div class="a" style="left:1898px;top:72px;width:16px;height:872px;background:#f5f5f5"></div>
<div class="a" style="left:1899px;top:131px;width:6px;height:805px;background:#e2e2e2;border-radius:3px"></div>
<div class="a" style="left:175px;top:937px;width:1739px;height:7px;background:#e8e8e8"></div>
<div class="a" style="left:1903px;top:894px;width:20px;height:34px;border:2px solid #8fb4e8;border-radius:6px;background:#eef4fc"></div>
<svg class="a" style="left:1771px;top:926px" width="143" height="18" viewBox="0 0 143 18"><rect x="0.5" y="0.5" width="150" height="20" fill="#fff" stroke="#c8c8c8"/><rect x="5" y="3.5" width="16" height="15" fill="#f3d5d5" stroke="#e0a0a0" stroke-width="1.5"/><path d="M15.5 9.5 Q15 8 13 8 Q10.5 8 10.5 10 Q10.5 12 13 12 Q15.5 12 15.5 14.5 Q15.5 17 13 17 Q10.5 17 10 15" fill="none" stroke="#222" stroke-width="2"/><path d="M28 8 H38 V14 H28 Z" fill="none" stroke="#333" stroke-width="2.2"/><path d="M33 4 V18" stroke="#999" stroke-width="2.2"/><path d="M57 5 Q58 13 50 16 Q47 17 48 14 Q54 12 55 6 Z" fill="#444"/><circle cx="70" cy="11" r="1.5" fill="#666"/><circle cx="75" cy="11" r="1.5" fill="#666"/><rect x="86" y="6" width="15" height="9" rx="1" fill="#555"/><rect x="88" y="8" width="11" height="2" fill="#ccc"/><circle cx="113.5" cy="7" r="3" fill="#555"/><path d="M108 18 Q108 11 113.5 11 Q119 11 119 18 Z" fill="#555"/><path d="M128 17 L135 10" stroke="#555" stroke-width="2.5"/><circle cx="136.5" cy="7.5" r="3.5" fill="none" stroke="#555" stroke-width="2.2"/></svg>
</div><script>(function(){var s=document.createElement("span");s.style.cssText="font:100px \"Liberation Sans\";position:absolute;left:0;top:0;visibility:hidden;white-space:nowrap";s.textContent="\u4e2d\u4e2d\u4e2d\u4e2d";document.body.appendChild(s);var w=s.getBoundingClientRect().width;document.body.removeChild(s);if(w<360){document.getElementById("root").className="nocjk";}})();</script></body></html>
